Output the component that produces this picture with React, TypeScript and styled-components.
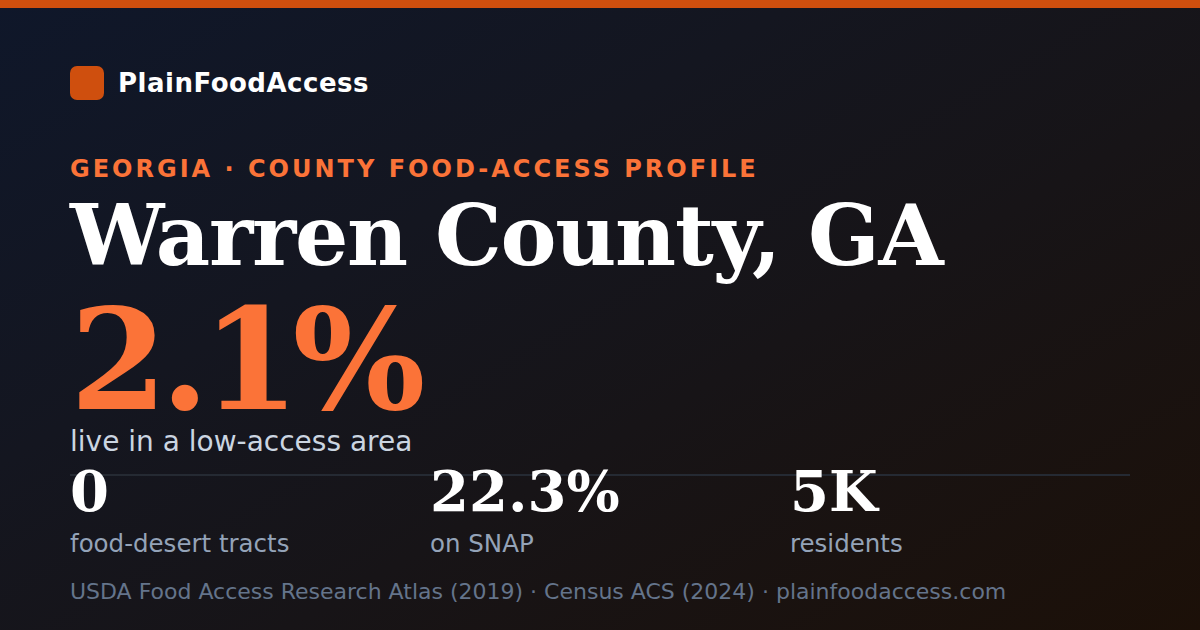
import React from "react";
import styled, { createGlobalStyle } from "styled-components";

type Stat = {
  value: string;
  label: string;
};

const stats: Stat[] = [
  { value: "0", label: "food-desert tracts" },
  { value: "22.3%", label: "on SNAP" },
  { value: "5K", label: "residents" },
];

const App = () => {
  return (
    <>
      <GlobalStyle />
      <Card>
        <TopBar />
        <Content>
          <Brand>
            <BrandMark />
            <BrandName>PlainFoodAccess</BrandName>
          </Brand>
          <Eyebrow>Georgia · County Food-Access Profile</Eyebrow>
          <Title>Warren County, GA</Title>
          <HeroValue>2.1%</HeroValue>
          <HeroLabel>live in a low-access area</HeroLabel>
          <StatsRow>
            {stats.map((stat) => (
              <StatItem key={stat.label}>
                <StatValue>{stat.value}</StatValue>
                <StatLabel>{stat.label}</StatLabel>
              </StatItem>
            ))}
          </StatsRow>
          <Sources>
            USDA Food Access Research Atlas (2019) · Census ACS (2024) ·
            plainfoodaccess.com
          </Sources>
        </Content>
      </Card>
    </>
  );
};

export default App;

const GlobalStyle = createGlobalStyle`
  html, body {
    margin: 0;
    padding: 0;
    background: #0f172a;
  }
  * {
    box-sizing: border-box;
  }
`;

const Card = styled.div`
  width: 1200px;
  height: 630px;
  display: flex;
  flex-direction: column;
  overflow: hidden;
  background: linear-gradient(
    150deg,
    #0f172a 0%,
    #141620 35%,
    #171417 60%,
    #1c1008 100%
  );
  font-family: "DejaVu Sans", "Liberation Sans", sans-serif;
`;

const TopBar = styled.div`
  height: 8px;
  flex-shrink: 0;
  background: #cf4f0e;
`;

const Content = styled.div`
  display: flex;
  flex-direction: column;
  padding: 58px 70px 0;
`;

const Brand = styled.div`
  display: flex;
  align-items: center;
  gap: 14px;
  height: 34px;
`;

const BrandMark = styled.div`
  width: 34px;
  height: 34px;
  border-radius: 7px;
  background: #cf4f0e;
`;

const BrandName = styled.div`
  color: #ffffff;
  font-size: 26px;
  font-weight: 700;
  letter-spacing: 0.5px;
`;

const Eyebrow = styled.div`
  margin-top: 55px;
  color: #fb7338;
  font-size: 24px;
  font-weight: 700;
  letter-spacing: 3px;
  text-transform: uppercase;
  line-height: 1.2;
`;

const Title = styled.h1`
  margin: 8px 0 0;
  color: #ffffff;
  font-family: "DejaVu Serif", "Liberation Serif", serif;
  font-size: 84px;
  font-weight: 700;
  letter-spacing: -0.015em;
  line-height: 1.05;
`;

const HeroValue = styled.div`
  margin-top: 21px;
  color: #fb7338;
  font-family: "DejaVu Serif", "Liberation Serif", serif;
  font-size: 140px;
  font-weight: 700;
  letter-spacing: -0.05em;
  line-height: 0.85;
`;

const HeroLabel = styled.div`
  margin-top: 5px;
  color: #cbd5e1;
  font-size: 28px;
  line-height: 1.2;
`;

const StatsRow = styled.div`
  display: grid;
  grid-template-columns: repeat(3, 360px);
  margin-top: 15px;
  border-top: 2px solid #252a33;
`;

const StatItem = styled.div`
  display: flex;
  flex-direction: column;
`;

const StatValue = styled.div`
  margin-top: -13px;
  color: #ffffff;
  font-family: "DejaVu Serif", "Liberation Serif", serif;
  font-size: 56px;
  font-weight: 700;
  line-height: 1;
`;

const StatLabel = styled.div`
  margin-top: 10px;
  color: #94a3b8;
  font-size: 24.5px;
  line-height: 1.2;
`;

const Sources = styled.div`
  margin-top: 21px;
  color: #64748b;
  font-size: 22px;
  line-height: 1.2;
`;
